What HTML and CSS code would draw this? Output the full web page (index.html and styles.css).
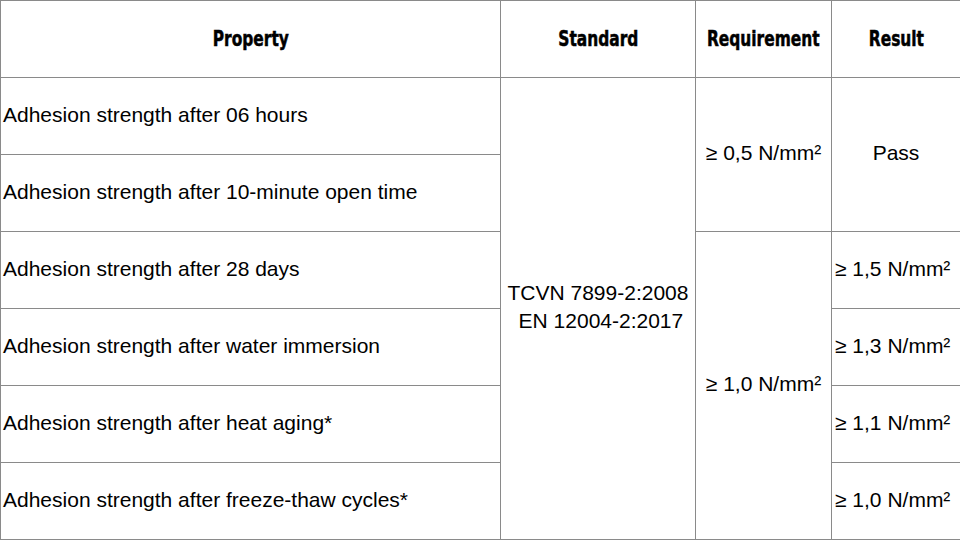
FILE: index.html
```html
<!DOCTYPE html>
<html>
<head>
<meta charset="utf-8">
<link rel="stylesheet" href="styles.css">
</head>
<body>
<table class="spec">
  <colgroup>
    <col class="c-prop">
    <col class="c-std">
    <col class="c-req">
    <col class="c-res">
  </colgroup>
  <thead>
    <tr class="head-row">
      <th><span class="hd">Property</span></th>
      <th><span class="hd">Standard</span></th>
      <th><span class="hd">Requirement</span></th>
      <th><span class="hd">Result</span></th>
    </tr>
  </thead>
  <tbody>
    <tr class="row">
      <td class="prop">Adhesion strength after 06 hours</td>
      <td class="center" rowspan="6">TCVN 7899-2:2008<br>&nbsp;EN 12004-2:2017</td>
      <td class="center" rowspan="2">≥ 0,5 N/mm²</td>
      <td class="center" rowspan="2">Pass</td>
    </tr>
    <tr class="row">
      <td class="prop">Adhesion strength after 10-minute open time</td>
    </tr>
    <tr class="row">
      <td class="prop">Adhesion strength after 28 days</td>
      <td class="center" rowspan="4">≥ 1,0 N/mm²</td>
      <td class="res">≥ 1,5 N/mm²</td>
    </tr>
    <tr class="row">
      <td class="prop">Adhesion strength after water immersion</td>
      <td class="res">≥ 1,3 N/mm²</td>
    </tr>
    <tr class="row">
      <td class="prop">Adhesion strength after heat aging*</td>
      <td class="res">≥ 1,1 N/mm²</td>
    </tr>
    <tr class="row last">
      <td class="prop">Adhesion strength after freeze-thaw cycles*</td>
      <td class="res">≥ 1,0 N/mm²</td>
    </tr>
  </tbody>
</table>
</body>
</html>
```
FILE: styles.css
```css
html, body {
  margin: 0;
  padding: 0;
  background: #ffffff;
}
body {
  width: 960px;
  height: 540px;
  overflow: hidden;
  font-family: "Liberation Sans", Arial, sans-serif;
  color: #000;
}
.spec {
  width: 960px;
  border-collapse: collapse;
  table-layout: fixed;
}
.c-prop { width: 500px; }
.c-std { width: 195px; }
.c-req { width: 136px; }
.c-res { width: 129px; }
.spec th, .spec td {
  border: 1px solid #8a8a8a;
  padding: 0;
  vertical-align: middle;
}
.spec th {
  font-family: "DejaVu Sans Condensed", "DejaVu Sans", sans-serif;
  font-weight: 700;
  font-size: 22px;
  line-height: 28px;
  text-align: center;
  white-space: nowrap;
}
.hd {
  display: inline-block;
  margin: 0 -30px;
  transform: scaleX(0.78);
  -webkit-text-stroke: 0.5px #000;
}
.head-row th { height: 76px; }
.spec td {
  font-size: 21px;
  line-height: 28px;
  padding-bottom: 3px;
}
.row td { height: 73px; }
.prop {
  text-align: left;
  padding-left: 2px !important;
}
.center { text-align: center; white-space: nowrap; }
.res {
  text-align: left;
  padding-left: 3px !important;
  white-space: nowrap;
}
```
